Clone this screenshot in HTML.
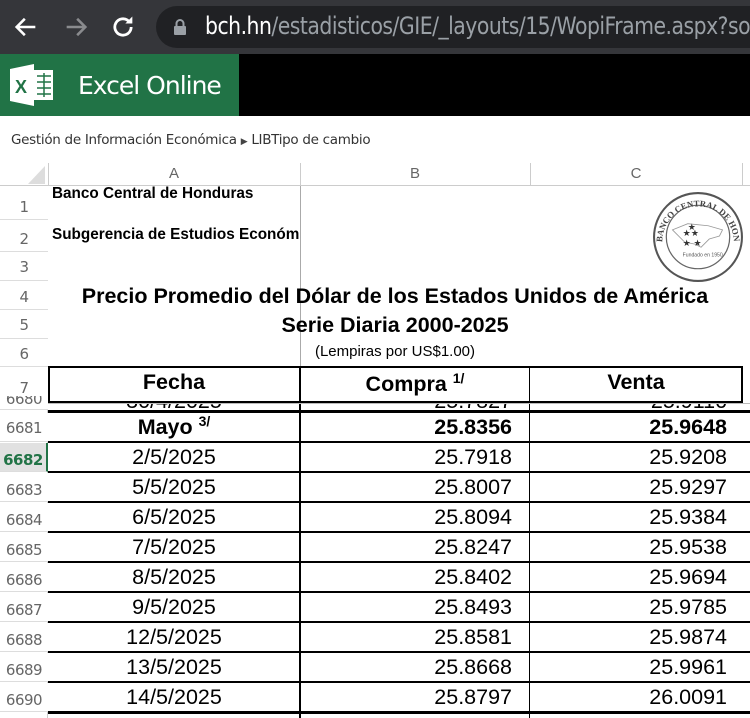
<!DOCTYPE html>
<html><head><meta charset="utf-8"><style>
*{margin:0;padding:0;box-sizing:border-box}
html,body{width:750px;height:718px;overflow:hidden}
body{background:#fff;position:relative;font-family:"Liberation Sans",Arial,sans-serif}
.a{position:absolute}
.rh{position:absolute;left:0;width:48px;color:#666;font-size:15px;text-align:center;border-bottom:1px solid #ddd;background:#fff;font-family:"DejaVu Sans","Liberation Sans",sans-serif;letter-spacing:-0.5px}
.cell{position:absolute;font-size:21.5px;color:#000;white-space:nowrap}
.hl{position:absolute;left:48px;width:702px;height:2px;background:#000}
</style></head><body>
<div class="a" style="left:0;top:0;width:750px;height:54px;background:#35363a"></div>
<svg class="a" style="left:12px;top:13px" width="28" height="28" viewBox="0 0 24 24"><path d="M20 12H5M11 5l-7 7 7 7" stroke="#fff" stroke-width="2.2" fill="none"/></svg>
<svg class="a" style="left:62px;top:13px" width="28" height="28" viewBox="0 0 24 24"><path d="M4 12h15M13 5l7 7-7 7" stroke="#8a8b8e" stroke-width="2.2" fill="none"/></svg>
<svg class="a" style="left:109px;top:13px" width="28" height="28" viewBox="0 0 24 24"><path d="M19 12a7 7 0 1 1-2.1-5" stroke="#fff" stroke-width="2.4" fill="none"/><path d="M20 3v6h-6z" fill="#fff"/></svg>
<div class="a" style="left:156px;top:6px;width:620px;height:42px;background:#202124;border-radius:21px"></div>
<svg class="a" style="left:173px;top:18px" width="14" height="18" viewBox="0 0 14 18"><path d="M3.5 8V5.5a3.5 3.5 0 0 1 7 0V8" stroke="#9aa0a6" stroke-width="2" fill="none"/><rect x="1" y="8" width="12" height="9" rx="1" fill="#9aa0a6"/></svg>
<div class="a" style="left:205px;top:12px;width:545px;overflow:hidden;white-space:nowrap"><div style="font-size:24px;color:#9aa0a6;white-space:nowrap;font-family:'DejaVu Sans','Liberation Sans',sans-serif;letter-spacing:-0.6px;transform:scaleX(0.85);transform-origin:0 0"><span style="color:#fff">bch.hn</span>/estadisticos/GIE/_layouts/15/WopiFrame.aspx?sourcedoc</div></div>
<div class="a" style="left:0;top:54px;width:750px;height:62px;background:#000"></div>
<div class="a" style="left:0;top:54px;width:239px;height:62px;background:#217346"></div>
<svg class="a" style="left:10px;top:63px" width="44" height="44" viewBox="0 0 44 44"><path d="M0 6L24 1v42L0 38z" fill="#fff"/><rect x="24" y="7" width="19" height="30" fill="#fff"/><g stroke="#217346" stroke-width="1.5"><path d="M27 13h14M27 19h14M27 25h14M27 31h14M34 10v24"/></g><text x="5" y="30" font-size="18" font-weight="bold" fill="#217346" font-family="Liberation Sans">X</text></svg>
<div class="a" style="left:78px;top:71px;font-size:25px;color:#fff;font-family:'DejaVu Sans','Liberation Sans',sans-serif;letter-spacing:-1px">Excel Online</div>
<div class="a" style="left:11px;top:132px;font-size:13.5px;color:#333;font-family:'DejaVu Sans','Liberation Sans',sans-serif;white-space:nowrap;letter-spacing:-0.3px">Gestión de Información Económica <span style="font-size:9px;color:#444">&#9654;</span> LIBTipo de cambio</div>
<div class="a" style="left:0;top:163px;width:750px;height:23px;border-bottom:1px solid #ccc;background:#fff"></div>
<svg class="a" style="left:25px;top:163px" width="22" height="22"><path d="M20 3V21H3z" fill="#ddd"/></svg>
<div class="a" style="left:48px;top:163px;width:1px;height:23px;background:#ccc"></div>
<div class="a" style="left:300px;top:163px;width:1px;height:23px;background:#ccc"></div>
<div class="a" style="left:530px;top:163px;width:1px;height:23px;background:#ccc"></div>
<div class="a" style="left:742px;top:163px;width:1px;height:23px;background:#ccc"></div>
<div class="a" style="left:48px;top:165px;width:252px;text-align:center;font-size:15px;color:#666">A</div>
<div class="a" style="left:300px;top:165px;width:230px;text-align:center;font-size:15px;color:#666">B</div>
<div class="a" style="left:530px;top:165px;width:212px;text-align:center;font-size:15px;color:#666">C</div>
<div class="a" style="left:47px;top:186px;width:1px;height:532px;background:#ccc"></div>
<div class="rh" style="top:186px;height:34px;padding-top:12px">1</div>
<div class="rh" style="top:220px;height:32px;padding-top:10px">2</div>
<div class="rh" style="top:252px;height:29px;padding-top:6px">3</div>
<div class="rh" style="top:281px;height:29px;padding-top:7px">4</div>
<div class="rh" style="top:310px;height:29px;padding-top:6px">5</div>
<div class="rh" style="top:339px;height:28px;padding-top:6px">6</div>
<div class="rh" style="top:367px;height:36px;padding-top:12px">7</div>
<div class="a" style="left:300px;top:186px;width:1px;height:182px;background:#aaa"></div>
<div class="cell" style="left:52px;top:185px;font-size:15.3px;font-weight:bold">Banco Central de Honduras</div>
<div class="cell" style="left:52px;top:226px;font-size:15.3px;font-weight:bold;width:248px;overflow:hidden">Subgerencia de Estudios Económicos</div>
<div class="cell" style="left:40px;top:284px;width:710px;text-align:center;font-weight:bold;font-size:21.5px">Precio Promedio del Dólar de los Estados Unidos de América</div>
<div class="cell" style="left:40px;top:313px;width:710px;text-align:center;font-weight:bold;font-size:21.5px">Serie Diaria 2000-2025</div>
<div class="cell" style="left:48px;top:343px;width:694px;text-align:center;font-size:15px">(Lempiras por US$1.00)</div>
<svg class="a" style="left:652px;top:191px" width="92" height="92" viewBox="0 0 90 90"><circle cx="45" cy="45" r="43" fill="#fff" stroke="#555" stroke-width="2"/><circle cx="45" cy="45" r="31" fill="none" stroke="#666" stroke-width="1.2"/><defs><path id="c" d="M10 50A35 35 0 1 1 80 50"/></defs><text font-size="8.5" font-family="Liberation Serif" font-weight="bold" fill="#444"><textPath href="#c">BANCO CENTRAL DE HONDURAS</textPath></text><path d="M20 38l15-6 20 2 14 4-3 6-10 3-8 8-6-3-10-2z" fill="none" stroke="#999" stroke-width="0.8"/><text x="30" y="44" font-size="9" fill="#333">★★</text><text x="35" y="38" font-size="9" fill="#333">★</text><text x="30" y="54" font-size="9" fill="#333">★ ★</text><text x="30" y="64" font-size="5" fill="#555">Fundado en 1950</text></svg>
<div class="a" style="left:48px;top:366px;width:695px;height:37px;border:2px solid #000"></div>
<div class="a" style="left:299px;top:366px;width:2px;height:37px;background:#000"></div>
<div class="a" style="left:529px;top:366px;width:1px;height:37px;background:#000"></div>
<div class="cell" style="left:48px;top:370px;width:252px;text-align:center;font-weight:bold">Fecha</div>
<div class="cell" style="left:300px;top:370px;width:230px;text-align:center;font-weight:bold">Compra <sup style="font-size:14px">1/</sup></div>
<div class="cell" style="left:530px;top:370px;width:212px;text-align:center;font-weight:bold">Venta</div>
<div class="a" style="left:0;top:403px;width:750px;height:1px;background:#bbb"></div>
<div class="rh" style="top:396px;height:14px;overflow:hidden;border-bottom:1px solid #ddd;line-height:6px">6680</div>
<div class="a" style="left:48px;top:404px;width:702px;height:6px;overflow:hidden"><div style="position:absolute;top:-15px;left:0;width:252px;text-align:center;font-size:21.5px">30/4/2025</div><div style="position:absolute;top:-15px;left:252px;width:212px;text-align:right;font-size:21.5px">25.7827</div><div style="position:absolute;top:-15px;left:482px;width:197px;text-align:right;font-size:21.5px">25.9116</div></div>
<div class="hl" style="top:410px;height:3px"></div>
<div class="a" style="left:299px;top:404px;width:2px;height:314px;background:#000"></div>
<div class="a" style="left:529px;top:404px;width:1px;height:314px;background:#000"></div>
<div class="rh" style="top:413px;height:29px;padding-top:6px">6681</div>
<div class="cell" style="left:48px;top:413px;width:252px;text-align:center;font-weight:bold">Mayo <sup style="font-size:14px">3/</sup></div>
<div class="cell" style="left:300px;top:415px;width:212px;text-align:right;font-weight:bold">25.8356</div>
<div class="cell" style="left:530px;top:415px;width:197px;text-align:right;font-weight:bold">25.9648</div>
<div class="hl" style="top:441px"></div>
<div class="rh" style="top:443px;height:29px;padding-top:8px;background:#e1e1e1;color:#217346;font-weight:bold;border-right:2px solid #217346">6682</div>
<div class="cell" style="left:48px;top:445px;width:252px;text-align:center">2/5/2025</div><div class="cell" style="left:300px;top:445px;width:212px;text-align:right">25.7918</div><div class="cell" style="left:530px;top:445px;width:197px;text-align:right">25.9208</div>
<div class="hl" style="top:471px"></div>
<div class="rh" style="top:473px;height:29px;padding-top:8px">6683</div>
<div class="cell" style="left:48px;top:475px;width:252px;text-align:center">5/5/2025</div><div class="cell" style="left:300px;top:475px;width:212px;text-align:right">25.8007</div><div class="cell" style="left:530px;top:475px;width:197px;text-align:right">25.9297</div>
<div class="hl" style="top:501px"></div>
<div class="rh" style="top:503px;height:29px;padding-top:8px">6684</div>
<div class="cell" style="left:48px;top:505px;width:252px;text-align:center">6/5/2025</div><div class="cell" style="left:300px;top:505px;width:212px;text-align:right">25.8094</div><div class="cell" style="left:530px;top:505px;width:197px;text-align:right">25.9384</div>
<div class="hl" style="top:531px"></div>
<div class="rh" style="top:533px;height:29px;padding-top:8px">6685</div>
<div class="cell" style="left:48px;top:535px;width:252px;text-align:center">7/5/2025</div><div class="cell" style="left:300px;top:535px;width:212px;text-align:right">25.8247</div><div class="cell" style="left:530px;top:535px;width:197px;text-align:right">25.9538</div>
<div class="hl" style="top:561px"></div>
<div class="rh" style="top:563px;height:29px;padding-top:8px">6686</div>
<div class="cell" style="left:48px;top:565px;width:252px;text-align:center">8/5/2025</div><div class="cell" style="left:300px;top:565px;width:212px;text-align:right">25.8402</div><div class="cell" style="left:530px;top:565px;width:197px;text-align:right">25.9694</div>
<div class="hl" style="top:591px"></div>
<div class="rh" style="top:593px;height:29px;padding-top:8px">6687</div>
<div class="cell" style="left:48px;top:595px;width:252px;text-align:center">9/5/2025</div><div class="cell" style="left:300px;top:595px;width:212px;text-align:right">25.8493</div><div class="cell" style="left:530px;top:595px;width:197px;text-align:right">25.9785</div>
<div class="hl" style="top:621px"></div>
<div class="rh" style="top:623px;height:29px;padding-top:8px">6688</div>
<div class="cell" style="left:48px;top:625px;width:252px;text-align:center">12/5/2025</div><div class="cell" style="left:300px;top:625px;width:212px;text-align:right">25.8581</div><div class="cell" style="left:530px;top:625px;width:197px;text-align:right">25.9874</div>
<div class="hl" style="top:651px"></div>
<div class="rh" style="top:653px;height:29px;padding-top:8px">6689</div>
<div class="cell" style="left:48px;top:655px;width:252px;text-align:center">13/5/2025</div><div class="cell" style="left:300px;top:655px;width:212px;text-align:right">25.8668</div><div class="cell" style="left:530px;top:655px;width:197px;text-align:right">25.9961</div>
<div class="hl" style="top:681px"></div>
<div class="rh" style="top:683px;height:29px;padding-top:8px">6690</div>
<div class="cell" style="left:48px;top:685px;width:252px;text-align:center">14/5/2025</div><div class="cell" style="left:300px;top:685px;width:212px;text-align:right">25.8797</div><div class="cell" style="left:530px;top:685px;width:197px;text-align:right">26.0091</div>
<div class="hl" style="top:711px;height:3px"></div>
</body></html>
